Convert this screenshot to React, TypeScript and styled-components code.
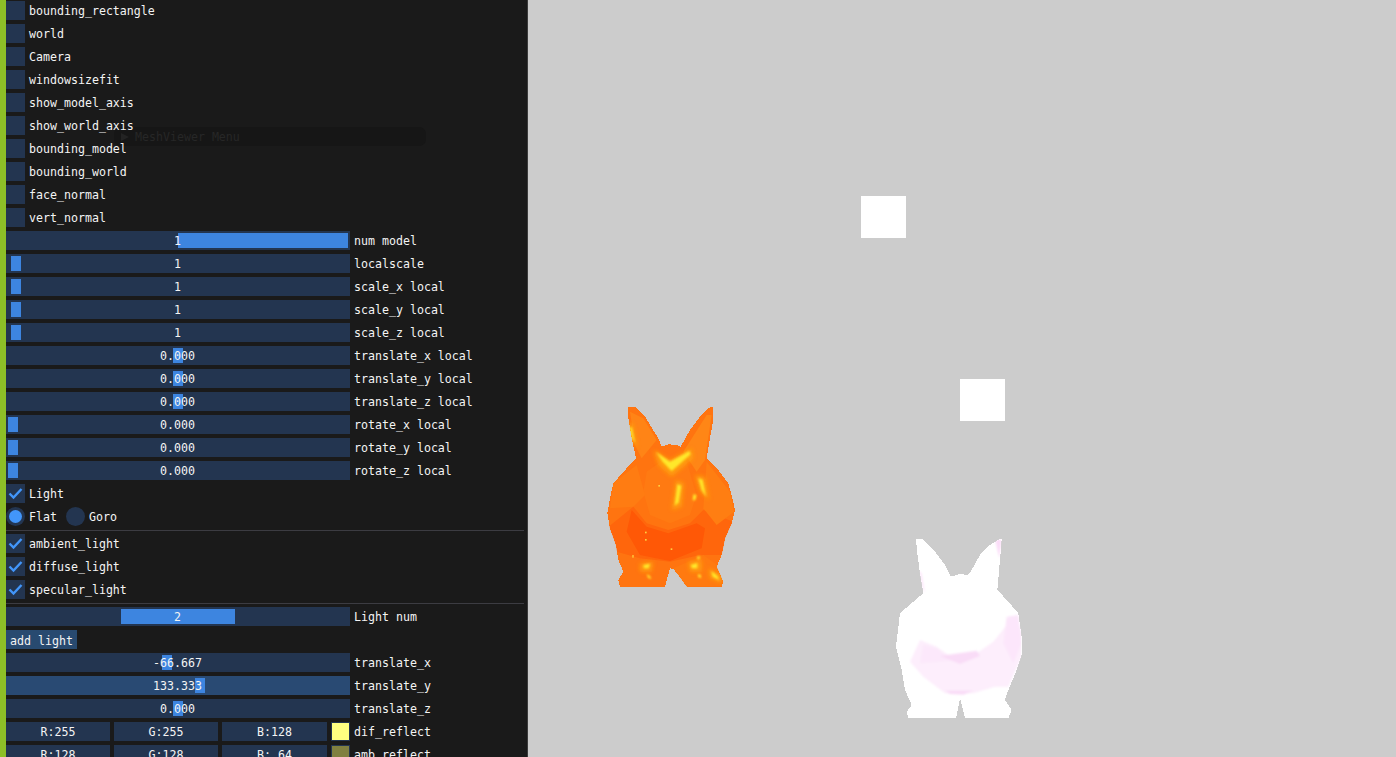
import React from "react";
import styled, { createGlobalStyle } from "styled-components";

const GlobalStyle = createGlobalStyle`
  html, body { margin: 0; padding: 0; height: 100%; overflow: hidden; background: #cccccc; }
  #root { height: 100%; }
`;

const Screen = styled.div`
  display: flex;
  width: 1396px;
  height: 757px;
  overflow: hidden;
  font-family: "DejaVu Sans Mono", monospace;
  font-size: 11.62px;
  font-weight: 400;
  color: #f4f4f4;
`;
const Accent = styled.div`
  flex: 0 0 6px;
  background: #8dbf27;
`;
const Panel = styled.div`
  position: relative;
  flex: 0 0 522px;
  display: flex;
  flex-direction: column;
  gap: 4px;
  padding-top: 1px;
  box-sizing: border-box;
  height: 757px;
  overflow: hidden;
  background: #1a1a1a;
  border-right: 1px solid #3c3c3c;
`;
const BackWindow = styled.div`
  position: absolute;
  left: 108px;
  top: 127px;
  width: 312px;
  height: 19px;
  border-radius: 7px;
  background: #161616;
  display: flex;
  align-items: center;
  gap: 6px;
  padding-left: 7px;
  box-sizing: border-box;
  color: #272727;
`;
const BackArrow = styled.span`
  width: 0;
  height: 0;
  border-left: 8px solid #232323;
  border-top: 4px solid transparent;
  border-bottom: 4px solid transparent;
`;
const Row = styled.div`
  position: relative;
  flex: 0 0 19px;
  height: 19px;
  display: flex;
  align-items: center;
  gap: 4px;
  white-space: nowrap;
`;
const Box = styled.span`
  flex: 0 0 19px;
  width: 19px;
  height: 19px;
  background: #233550;
  display: flex;
`;
const Tick = styled.svg`
  width: 19px;
  height: 19px;
`;
const Label = styled.span`
  height: 19px;
  line-height: 21px;
`;
const Track = styled.div<{ $hover?: boolean }>`
  position: relative;
  flex: 0 0 344px;
  height: 19px;
  background: ${(p) => (p.$hover ? "#294a73" : "#233550")};
  text-align: center;
  line-height: 21px;
`;
const Grab = styled.span<{ $left: number; $width: number }>`
  position: absolute;
  top: 2px;
  left: ${(p) => p.$left}px;
  width: ${(p) => p.$width}px;
  height: 15px;
  background: #3d85e0;
`;
const Value = styled.span`
  position: relative;
  left: -0.5px;
`;
const Radio = styled.span<{ $on?: boolean }>`
  flex: 0 0 19px;
  width: 19px;
  height: 19px;
  border-radius: 50%;
  background: #233550;
  display: flex;
  align-items: center;
  justify-content: center;
  &::after {
    content: "";
    display: ${(p) => (p.$on ? "block" : "none")};
    width: 13px;
    height: 13px;
    border-radius: 50%;
    background: #4296fa;
  }
`;
const RadioLabel = styled(Label)`
  margin-right: 5px;
`;
const Separator = styled.div`
  flex: 0 0 1px;
  width: 518px;
  margin-bottom: -1px;
  background: #3c3c42;
`;
const Button = styled.button`
  width: 71px;
  height: 19px;
  border: 0;
  padding: 2px 0 0;
  background: #284a70;
  color: inherit;
  font: inherit;
`;
const Channels = styled.div`
  display: grid;
  grid-template-columns: 104px 104px 105px;
  gap: 4px;
`;
const Channel = styled.span`
  height: 19px;
  line-height: 21px;
  text-align: center;
  background: #233550;
`;
const Swatch = styled.span<{ $color: string }>`
  flex: 0 0 19px;
  box-sizing: border-box;
  width: 19px;
  height: 19px;
  background: ${(p) => p.$color};
  border: 1px solid #233550;
`;
const Viewport = styled.div`
  flex: 1;
  background: #cccccc;
`;
const Scene = styled.svg`
  display: block;
  width: 868px;
  height: 757px;
`;

const checks = [
  "bounding_rectangle", "world", "Camera", "windowsizefit", "show_model_axis",
  "show_world_axis", "bounding_model", "bounding_world", "face_normal", "vert_normal",
];
type S = { label: string; value: string; left: number; width: number; hover?: boolean };
const sliders: S[] = [
  { label: "num model", value: "1", left: 172, width: 170 },
  { label: "localscale", value: "1", left: 5, width: 10 },
  { label: "scale_x local", value: "1", left: 5, width: 10 },
  { label: "scale_y local", value: "1", left: 5, width: 10 },
  { label: "scale_z local", value: "1", left: 5, width: 10 },
  { label: "translate_x local", value: "0.000", left: 167, width: 10 },
  { label: "translate_y local", value: "0.000", left: 167, width: 10 },
  { label: "translate_z local", value: "0.000", left: 167, width: 10 },
  { label: "rotate_x local", value: "0.000", left: 2, width: 10 },
  { label: "rotate_y local", value: "0.000", left: 2, width: 10 },
  { label: "rotate_z local", value: "0.000", left: 2, width: 10 },
];
const lightSliders: S[] = [
  { label: "translate_x", value: "-66.667", left: 156, width: 10 },
  { label: "translate_y", value: "133.333", left: 189, width: 10, hover: true },
  { label: "translate_z", value: "0.000", left: 167, width: 10 },
];

const CheckRow = ({ label, on }: { label: string; on?: boolean }) => (
  <Row>
    <Box>
      {on && (
        <Tick viewBox="0 0 19 19">
          <polyline points="3.5,9.5 7.5,13.5 15.5,5" fill="none" stroke="#4296fa" strokeWidth="2.4" />
        </Tick>
      )}
    </Box>
    <Label>{label}</Label>
  </Row>
);
const SliderRow = ({ label, value, left, width, hover }: S) => (
  <Row>
    <Track $hover={hover}>
      <Grab $left={left} $width={width} />
      <Value>{value}</Value>
    </Track>
    <Label>{label}</Label>
  </Row>
);
const ColorRow = ({ c, color, label }: { c: string[]; color: string; label: string }) => (
  <Row>
    <Channels>
      {c.map((t) => (
        <Channel key={t}>{t}</Channel>
      ))}
    </Channels>
    <Swatch $color={color} />
    <Label>{label}</Label>
  </Row>
);

const orange =
  "115,35 135,35 165,65 205,130 215,155 235,148 262,150 272,155 300,105 330,65 358,38 370,35 370,75 360,130 350,190 385,225 415,265 425,300 435,345 425,385 405,430 395,480 380,515 400,560 395,575 290,575 265,540 250,522 240,520 225,575 90,575 85,555 100,530 85,495 78,450 60,400 52,355 60,310 70,265 110,220 138,190 125,130 115,70";
const white =
  "108,28 130,28 165,65 195,105 212,140 240,132 262,135 272,125 300,75 330,45 358,28 365,28 360,90 352,180 385,215 415,250 425,320 425,375 410,420 385,480 375,510 395,540 385,565 255,565 240,505 228,565 85,565 80,545 95,525 75,480 65,420 48,350 60,250 100,215 130,190 120,130 112,70";

const OrangeBunny = () => (
  <g transform="translate(62,395) scale(0.3333)">
    <clipPath id="oc">
      <polygon points={orange} />
    </clipPath>
    <polygon points={orange} fill="#ff7410" shapeRendering="crispEdges" />
    <g clipPath="url(#oc)">
      <polygon points="50,400 130,335 170,385 235,405 300,385 340,345 430,380 395,480 330,480 240,500 150,490 80,470" fill="#ff660c" />
      <polygon points="125,345 170,395 235,415 320,385 345,400 335,460 240,498 150,480 110,410" fill="#ff5806" />
      <polygon points="170,230 220,195 290,200 320,300 300,360 240,385 180,360 160,290" fill="#ff7a12" />
      <polygon points="70,265 140,210 165,300 130,335 60,340" fill="#ff7c12" />
      <polygon points="350,200 420,290 432,350 380,390 340,340" fill="#ff7e12" />
      <polygon points="250,520 340,480 395,520 395,575 290,575" fill="#ff7a10" />
      <polygon points="120,50 160,70 200,135 155,190 135,150" fill="#ff8416" />
      <polygon points="280,170 350,60 365,60 345,195 320,230" fill="#ff8616" />
      <g filter="url(#wide)" fill="#ffa810" opacity="0.75">
        <polygon points="190,165 240,195 305,160 310,190 245,245 205,210" />
        <polygon points="258,255 282,265 275,335 245,345" />
        <polygon points="315,240 345,245 358,315 330,290" />
        <polygon points="150,505 190,500 185,530 150,530" />
        <polygon points="295,500 335,495 335,530 300,530" />
        <polygon points="355,520 395,540 395,565 360,550" />
        <polygon points="112,85 128,85 142,160 122,135" />
      </g>
      <g filter="url(#soft)" fill="#ffe82c">
        <polygon points="198,170 240,200 298,168 302,178 245,228 218,200" />
        <polygon points="262,268 274,272 266,322 254,332" />
        <polygon points="118,100 125,95 135,145 125,128" />
        <polygon points="325,250 338,254 348,305 335,285" />
        <polygon points="310,298 320,300 316,316 308,316" />
        <polygon points="160,510 180,506 176,520 162,520" />
        <polygon points="302,510 322,504 322,520 306,520" />
        <polygon points="170,537 180,543 184,553 174,548" />
        <polygon points="364,528 382,542 388,555 368,545" />
        <polygon points="322,484 330,484 328,494 322,492" />
        <polygon points="324,537 333,541 333,550 324,545" />
      </g>
      <g fill="#ffd040">
        <rect x="205" y="270" width="5" height="5" />
        <rect x="165" y="410" width="5" height="5" />
        <rect x="165" y="432" width="5" height="5" />
        <rect x="242" y="460" width="5" height="5" />
        <rect x="127" y="480" width="4" height="8" />
      </g>
    </g>
  </g>
);
const WhiteBunny = () => (
  <g transform="translate(352,530) scale(0.3333)">
    <clipPath id="wc">
      <polygon points={white} />
    </clipPath>
    <polygon points={white} fill="#ffffff" shapeRendering="crispEdges" />
    <g clipPath="url(#wc)">
      <g filter="url(#soft)">
        <polygon points="120,330 170,350 220,385 290,370 340,335 400,260 425,300 425,380 385,470 345,470 280,490 195,490 130,440 90,395" fill="#fdeefc" />
        <polygon points="380,260 415,255 425,340 400,400 370,340" fill="#fce6fb" />
        <polygon points="130,345 170,355 215,392 120,400" fill="#fce8fb" />
        <polygon points="180,378 290,362 300,378 240,402" fill="#f9dcf7" />
        <polygon points="195,482 280,482 250,494 210,492" fill="#f9dcf7" />
        <polygon points="345,28 365,28 358,85" fill="#fbdcf8" />
        <polygon points="112,120 125,130 135,190 125,170" fill="#fde8fb" />
      </g>
    </g>
  </g>
);

export default function App() {
  return (
    <>
      <GlobalStyle />
      <Screen>
        <Accent />
        <Panel>
          <BackWindow>
            <BackArrow />
            <span>MeshViewer Menu</span>
          </BackWindow>
          {checks.map((c) => (
            <CheckRow key={c} label={c} />
          ))}
          {sliders.map((s) => (
            <SliderRow key={s.label} {...s} />
          ))}
          <CheckRow label="Light" on />
          <Row>
            <Radio $on />
            <RadioLabel>Flat</RadioLabel>
            <Radio />
            <Label>Goro</Label>
          </Row>
          <Separator />
          <CheckRow label="ambient_light" on />
          <CheckRow label="diffuse_light" on />
          <CheckRow label="specular_light" on />
          <Separator />
          <SliderRow label="Light num" value="2" left={115} width={114} />
          <Row>
            <Button>add light</Button>
          </Row>
          {lightSliders.map((s) => (
            <SliderRow key={s.label} {...s} />
          ))}
          <ColorRow c={["R:255", "G:255", "B:128"]} color="#ffff80" label="dif_reflect" />
          <ColorRow c={["R:128", "G:128", "B: 64"]} color="#808040" label="amb_reflect" />
        </Panel>
        <Viewport>
          <Scene viewBox="0 0 868 757">
            <defs>
              <filter id="soft" x="-30%" y="-30%" width="160%" height="160%">
                <feGaussianBlur stdDeviation="2.5" />
              </filter>
              <filter id="wide" x="-40%" y="-40%" width="180%" height="180%">
                <feGaussianBlur stdDeviation="7" />
              </filter>
            </defs>
            <rect x="333" y="196" width="45" height="42" fill="#ffffff" />
            <rect x="432" y="379" width="45" height="42" fill="#ffffff" />
            <OrangeBunny />
            <WhiteBunny />
          </Scene>
        </Viewport>
      </Screen>
    </>
  );
}
